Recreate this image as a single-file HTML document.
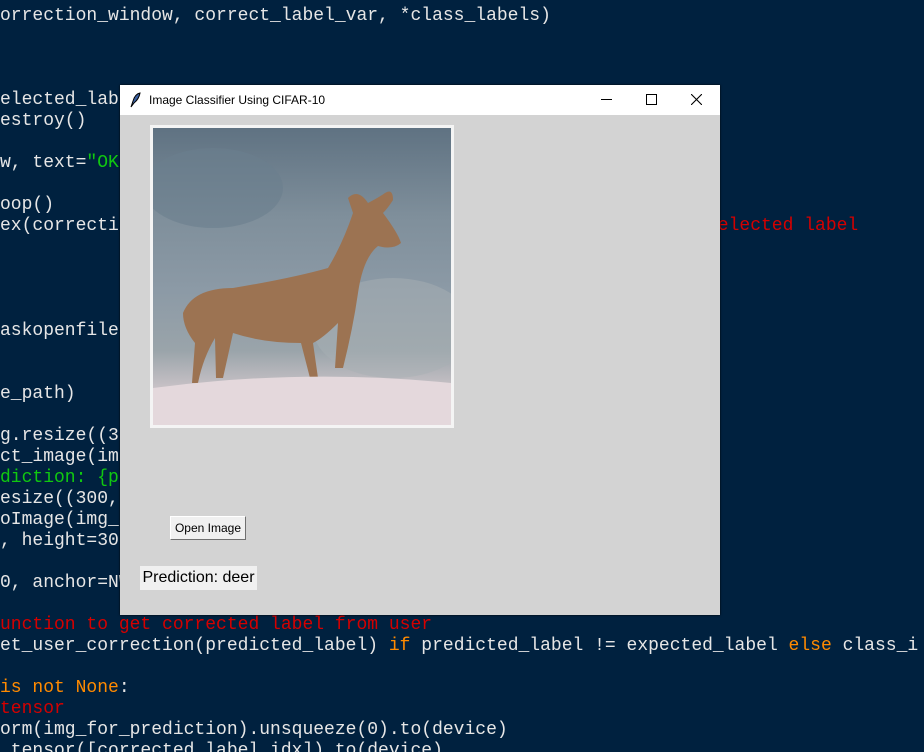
<!DOCTYPE html>
<html><head><meta charset="utf-8"><style>
html,body{margin:0;width:924px;height:752px;overflow:hidden}
body{background:#00213f;position:relative;font-family:"Liberation Mono",monospace;}
.l{position:absolute;left:0;font-size:18px;line-height:21px;color:#e6e6e6;white-space:pre;}
.r{color:#d40000}.g{color:#10c810}.o{color:#ff8a00}
#win{position:absolute;left:120px;top:85px;width:600px;height:530px;background:#d3d3d3;box-shadow:0 0 2px #000;}
#tb{height:30px;background:#fff;position:relative;font-family:"Liberation Sans",sans-serif;font-size:12px;}
#tb .t{position:absolute;left:29px;top:8px;color:#000}
</style></head><body>
<div class="l" style="top:6px">orrection_window, correct_label_var, *class_labels)</div>
<div class="l" style="top:90px">elected_label</div>
<div class="l" style="top:111px">estroy()</div>
<div class="l" style="top:153px">w, text=<span class="g">"OK"</span></div>
<div class="l" style="top:195px">oop()</div>
<div class="l" style="top:216px">ex(correction</div>
<div class="l r" style="top:216px;left:707px">selected label</div>
<div class="l" style="top:321px">askopenfilename</div>
<div class="l" style="top:384px">e_path)</div>
<div class="l" style="top:426px">g.resize((300</div>
<div class="l" style="top:447px">ct_image(img</div>
<div class="l g" style="top:468px">diction: {pre</div>
<div class="l" style="top:489px">esize((300, 3</div>
<div class="l" style="top:510px">oImage(img_</div>
<div class="l" style="top:531px">, height=300</div>
<div class="l" style="top:573px">0, anchor=NW</div>
<div class="l r" style="top:615px">unction to get corrected label from user</div>
<div class="l" style="top:636px">et_user_correction(predicted_label) <span class="o">if</span> predicted_label != expected_label <span class="o">else</span> class_i</div>
<div class="l" style="top:678px"><span class="o">is not None</span>:</div>
<div class="l r" style="top:699px">tensor</div>
<div class="l" style="top:720px">orm(img_for_prediction).unsqueeze(0).to(device)</div>
<div class="l" style="top:741px">_tensor([corrected_label_idx]).to(device)</div>

<div id="win">
 <div id="tb">
  <svg style="position:absolute;left:9px;top:7px" width="12" height="16" viewBox="0 0 12 16"><path d="M2 15 L4 9 Q6 2 11 1 Q10 7 5 11 Z" fill="#3a5fa0" stroke="#000" stroke-width="1"/></svg>
  <span class="t">Image Classifier Using CIFAR-10</span>
  <div style="position:absolute;left:481px;top:14px;width:11px;height:1px;background:#000"></div>
  <div style="position:absolute;left:526px;top:9px;width:9px;height:9px;border:1px solid #000"></div>
  <svg style="position:absolute;left:571px;top:9px" width="11" height="11"><path d="M0 0L11 11M11 0L0 11" stroke="#000" stroke-width="1.1"/></svg>
 </div>
 <div style="position:absolute;left:30px;top:40px;width:298px;height:297px;border:3px solid #f4f4f4;overflow:hidden;background:linear-gradient(180deg,#5f7282 0%,#7f8f9b 30%,#8c9aa6 55%,#9aa4aa 75%,#d8ccd0 92%,#e8dde0 100%)">
  <svg width="298" height="297" viewBox="0 0 298 297">
   <ellipse cx="60" cy="60" rx="70" ry="40" fill="#6a7f8e" opacity=".6"/>
   <ellipse cx="240" cy="200" rx="80" ry="50" fill="#a8b0b4" opacity=".5"/>
   <path d="M30 185 Q40 160 80 160 Q140 150 175 140 Q190 115 200 85 L195 70 Q205 60 215 75 Q225 70 232 65 Q240 60 240 72 Q235 80 230 85 Q245 105 248 115 Q240 122 225 118 Q210 130 205 165 Q200 200 190 240 L182 240 L185 195 Q170 210 160 215 L165 250 L157 250 L148 215 Q110 215 80 205 L70 250 L63 250 L62 210 Q50 230 45 255 L39 255 L42 215 Q30 200 30 185 Z" fill="#9c7352"/>
   <path d="M0 260 Q150 240 298 255 L298 297 L0 297 Z" fill="#e4d8dc"/>
  </svg>
 </div>
 <div style="position:absolute;left:50px;top:431px;width:76px;height:24px;box-sizing:border-box;background:#f0f0f0;border:1px solid;border-color:#fff #707070 #707070 #fff;font-family:'Liberation Sans',sans-serif;font-size:12px;line-height:22px;text-align:center;color:#000">Open Image</div>
 <div style="position:absolute;left:20px;top:481px;width:117px;height:24px;background:#f0f0f0;font-family:'Liberation Sans',sans-serif;font-size:16px;line-height:24px;text-align:center;color:#000">Prediction: deer</div>
</div>
</body></html>
